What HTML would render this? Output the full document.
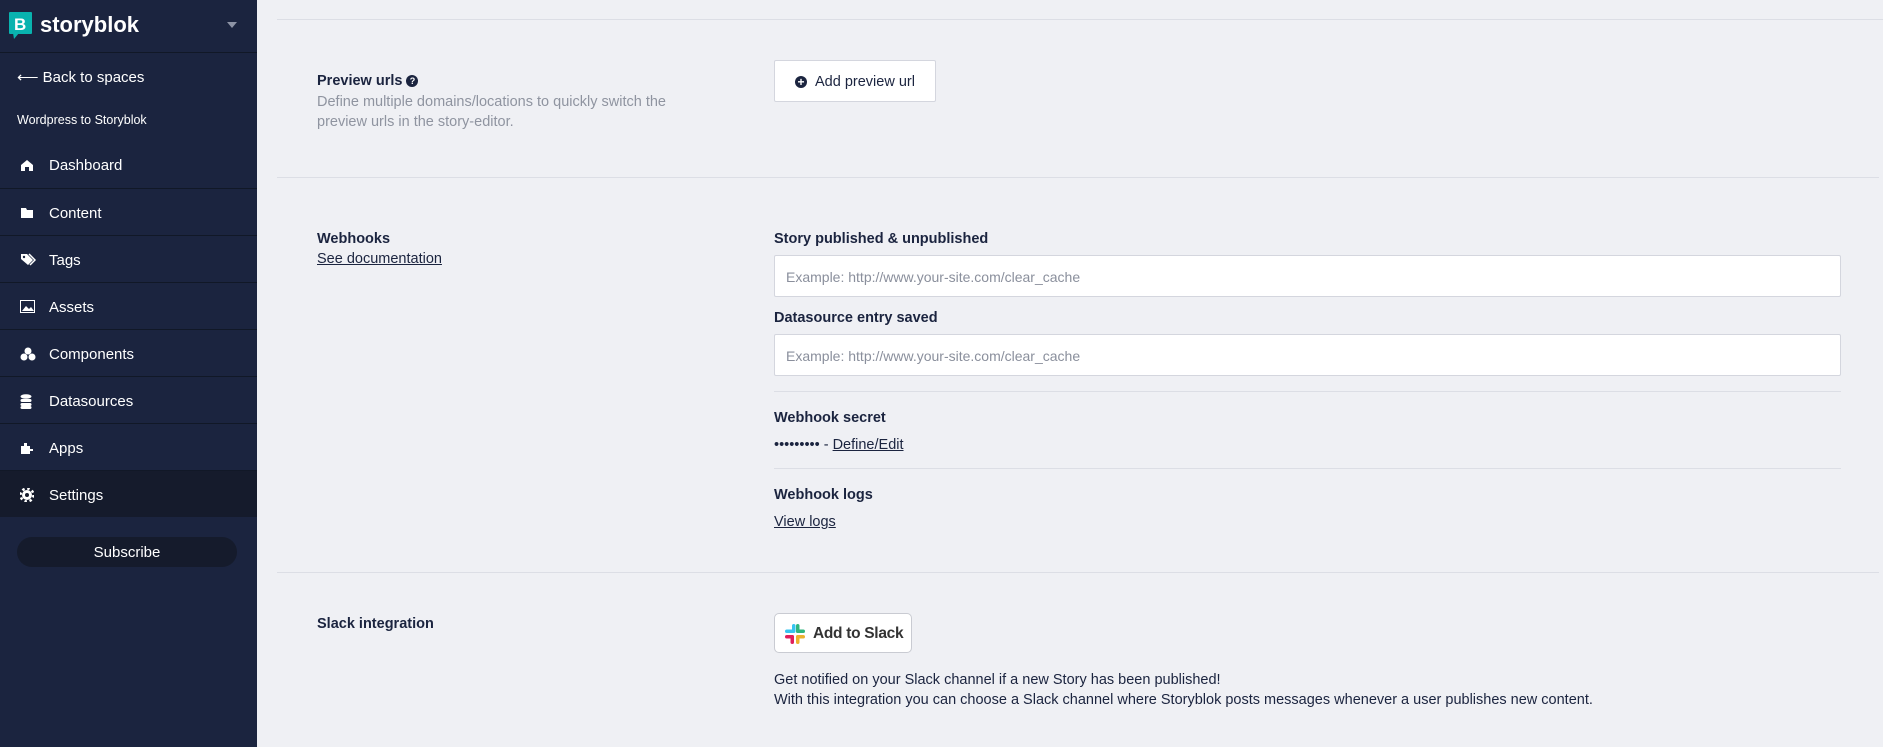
<!DOCTYPE html>
<html><head><meta charset="utf-8"><style>
*{box-sizing:border-box;margin:0;padding:0}
body{width:1883px;height:747px;overflow:hidden;background:#eff0f4;font-family:"Liberation Sans",sans-serif;color:#1b243f;position:relative}
.sb{position:absolute;left:0;top:0;width:257px;height:747px;background:#1b243f;color:#fff}
.a{position:absolute}
.hd{height:53px;border-bottom:1px solid #111827}
.nav{position:absolute;left:0;width:257px;height:47px;border-top:1px solid #111827;font-size:15px;line-height:49px;padding-left:49px}
.nav svg{position:absolute;left:20px;top:17px}
.line{position:absolute;height:1px;background:#dcdee5}
.lbl{position:absolute;font-size:14.5px;font-weight:bold}
.txt{position:absolute;font-size:14.5px}
.inp{position:absolute;left:774px;width:1067px;height:42px;background:#fff;border:1px solid #d4d6de;border-radius:2px;font-size:14px;color:#8a8f9c;padding-left:11px;line-height:42px}
u{text-decoration:underline}
</style></head><body>
<div class="sb">
 <div class="hd"></div>
 <svg class="a" style="left:9px;top:12px" width="24" height="28" viewBox="0 0 24 28"><rect width="23" height="22" rx="1" fill="#09b3af"/><path d="M4 21h6l-5 6z" fill="#09b3af"/><text x="5" y="18" font-family="Liberation Sans" font-weight="bold" font-size="17" fill="#fff">B</text></svg>
 <div class="a" style="left:40px;top:12px;font-size:22px;font-weight:bold">storyblok</div>
 <div class="a" style="left:227px;top:22px;width:0;height:0;border-left:5px solid transparent;border-right:5px solid transparent;border-top:6px solid #8d93a5"></div>
 <div class="a" style="left:17px;top:68px;font-size:15px">⟵ Back to spaces</div>
 <div class="a" style="left:17px;top:113px;font-size:12.5px">Wordpress to Storyblok</div>
 <div class="nav" style="top:141px;border-top:none">Dashboard<svg width="14" height="14" viewBox="0 0 14 14"><path d="M1 7L7 2l6 5v6H9V9H5v4H1z" fill="#fff"/></svg></div>
 <div class="nav" style="top:188px">Content<svg width="14" height="14" viewBox="0 0 14 14"><path d="M1 2h5l1 2h6v8H1z" fill="#fff"/></svg></div>
 <div class="nav" style="top:235px">Tags<svg width="16" height="14" viewBox="0 0 16 14"><path d="M1 1h6l6 6-5 5-7-6z" fill="#fff"/><path d="M9 1l6 6-5 5" stroke="#fff" stroke-width="1.5" fill="none"/><circle cx="4" cy="4" r="1.2" fill="#1b243f"/></svg></div>
 <div class="nav" style="top:282px">Assets<svg width="15" height="13" viewBox="0 0 15 13"><rect x=".5" y=".5" width="14" height="12" stroke="#fff" fill="none"/><path d="M2 11l4-5 3 3 2-2 3 4z" fill="#fff"/></svg></div>
 <div class="nav" style="top:329px">Components<svg width="16" height="15" viewBox="0 0 16 15"><circle cx="8" cy="4" r="3.5" fill="#fff"/><circle cx="4" cy="10" r="3.5" fill="#fff"/><circle cx="12" cy="10" r="3.5" fill="#fff"/></svg></div>
 <div class="nav" style="top:376px">Datasources<svg width="12" height="15" viewBox="0 0 12 15"><ellipse cx="6" cy="2.5" rx="5.5" ry="2.3" fill="#fff"/><rect x=".5" y="5" width="11" height="3" rx="1.5" fill="#fff"/><rect x=".5" y="9" width="11" height="3" rx="1.5" fill="#fff"/><rect x=".5" y="12" width="11" height="3" rx="1.5" fill="#fff"/></svg></div>
 <div class="nav" style="top:423px">Apps<svg width="15" height="14" viewBox="0 0 15 14"><path d="M1 5h3V2h3v3h3v3h3v2h-3v3H1z" fill="#fff"/></svg></div>
 <div class="nav" style="top:470px;background:#151b2c;border-top:1px solid #111827">Settings<svg width="14" height="14" viewBox="0 0 14 14"><circle cx="7" cy="7" r="5" fill="#fff"/><circle cx="7" cy="7" r="6.5" fill="none" stroke="#fff" stroke-width="2.5" stroke-dasharray="2.5 2.6"/><circle cx="7" cy="7" r="2" fill="#151b2c"/></svg></div>
 <div class="a" style="left:17px;top:537px;width:220px;height:30px;border-radius:15px;background:#151b2c;text-align:center;line-height:31px;font-size:15px">Subscribe</div>
</div>

<div class="line" style="left:277px;top:19px;width:1606px"></div>
<div class="lbl" style="left:317px;top:73px">Preview urls <span style="display:inline-block;width:12px;height:12px;border-radius:50%;background:#1b243f;color:#fff;font-size:9px;text-align:center;line-height:12px;vertical-align:1px">?</span></div>
<div class="txt" style="left:317px;top:92px;color:#8f94a0;line-height:20px">Define multiple domains/locations to quickly switch the<br>preview urls in the story-editor.</div>
<div class="a" style="left:774px;top:60px;width:162px;height:42px;background:#fff;border:1px solid #d4d6de;border-radius:2px;font-size:14.5px;line-height:42px;padding-left:40px">Add preview url<span style="position:absolute;left:20px;top:15px;width:12px;height:12px;border-radius:50%;background:#1b243f;color:#fff;font-size:12px;line-height:12px;text-align:center;font-weight:bold">+</span></div>
<div class="line" style="left:277px;top:177px;width:1602px"></div>

<div class="lbl" style="left:317px;top:231px">Webhooks</div>
<div class="txt" style="left:317px;top:251px"><u>See documentation</u></div>
<div class="lbl" style="left:774px;top:231px">Story published &amp; unpublished</div>
<div class="inp" style="top:255px">Example: http://www.your-site.com/clear_cache</div>
<div class="lbl" style="left:774px;top:310px">Datasource entry saved</div>
<div class="inp" style="top:334px">Example: http://www.your-site.com/clear_cache</div>
<div class="line" style="left:774px;top:391px;width:1067px"></div>
<div class="lbl" style="left:774px;top:410px">Webhook secret</div>
<div class="txt" style="left:774px;top:437px">••••••••• - <u>Define/Edit</u></div>
<div class="line" style="left:774px;top:468px;width:1067px"></div>
<div class="lbl" style="left:774px;top:487px">Webhook logs</div>
<div class="txt" style="left:774px;top:514px"><u>View logs</u></div>
<div class="line" style="left:277px;top:572px;width:1602px"></div>

<div class="lbl" style="left:317px;top:616px">Slack integration</div>
<div class="a" style="left:774px;top:613px;width:138px;height:40px;background:#fff;border:1px solid #c9cbd2;border-radius:5px">
 <svg class="a" style="left:9px;top:9px" width="22" height="22" viewBox="0 0 22 22"><rect x="8" y="1" width="3.5" height="9" rx="1.75" fill="#36c5f0"/><rect x="1" y="6.5" width="9" height="3.5" rx="1.75" fill="#36c5f0"/><rect x="12" y="6.5" width="9" height="3.5" rx="1.75" fill="#2eb67d"/><rect x="12" y="1" width="3.5" height="9" rx="1.75" fill="#2eb67d"/><rect x="1" y="12" width="9" height="3.5" rx="1.75" fill="#e01e5a"/><rect x="6.5" y="12" width="3.5" height="9" rx="1.75" fill="#e01e5a"/><rect x="12" y="12" width="9" height="3.5" rx="1.75" fill="#ecb22e"/><rect x="12" y="12" width="3.5" height="9" rx="1.75" fill="#ecb22e"/></svg>
 <div class="a" style="left:38px;top:11px;font-size:15.5px;color:#333;font-weight:bold;letter-spacing:-.3px">Add to Slack</div>
</div>
<div class="txt" style="left:774px;top:670px;line-height:20px">Get notified on your Slack channel if a new Story has been published!<br>With this integration you can choose a Slack channel where Storyblok posts messages whenever a user publishes new content.</div>
</body></html>
